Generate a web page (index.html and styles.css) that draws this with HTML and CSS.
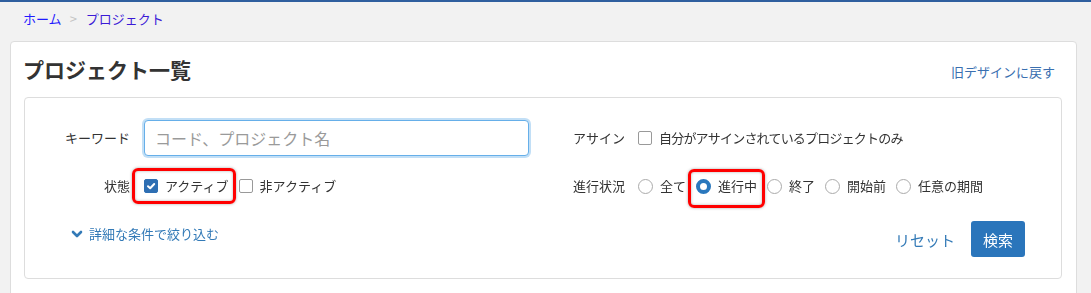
FILE: index.html
```html
<!DOCTYPE html>
<html lang="ja">
<head>
  <meta charset="UTF-8" />
  <title>プロジェクト一覧</title>
  <meta name="viewport" content="width=device-width, initial-scale=1.0" />
  <link rel="stylesheet" href="styles.css">
</head>
<body>

  <!-- Breadcrumb -->
  <div class="breadcrumb">
    <a class="crumb-home" href="#">ホーム</a>
    <span class="crumb-sep">&gt;</span>
    <a class="crumb-current" href="#">プロジェクト</a>
  </div>

  <!-- Card -->
  <div class="card">
    <div class="card-header">
      <h1 class="card-title">プロジェクト一覧</h1>
      <a class="old-design" href="#">旧デザインに戻す</a>
    </div>

    <!-- Search Panel -->
    <div class="search-panel">
      <div class="search-row">
        <div class="field">
          <span class="field-label">キーワード</span>
          <input class="keyword-input" type="text" placeholder="コード、プロジェクト名" autofocus />
        </div>
        <div class="field field-right">
          <span class="inline-label">アサイン</span>
          <label class="option">
            <span class="check"></span>
            <span class="assign-text">自分がアサインされているプロジェクトのみ</span>
          </label>
        </div>
      </div>

      <div class="search-row">
        <div class="field">
          <span class="field-label">状態</span>
          <div class="options">
            <label class="option marked marked-left">
              <span class="check checked">
                <svg width="10" height="10" viewBox="0 0 10 10"><polyline points="2,5.2 4.2,7.3 8.2,3" fill="none" stroke="#fff" stroke-width="2" stroke-linecap="round" stroke-linejoin="round"/></svg>
              </span>
              <span>アクティブ</span>
            </label>
            <label class="option">
              <span class="check"></span>
              <span>非アクティブ</span>
            </label>
          </div>
        </div>
        <div class="field field-right">
          <span class="inline-label">進行状況</span>
          <div class="options">
            <label class="option"><span class="radio"></span><span>全て</span></label>
            <label class="option marked marked-right"><span class="radio checked"></span><span>進行中</span></label>
            <label class="option"><span class="radio"></span><span>終了</span></label>
            <label class="option"><span class="radio"></span><span>開始前</span></label>
            <label class="option"><span class="radio"></span><span>任意の期間</span></label>
          </div>
        </div>
      </div>

      <div class="search-row actions-row">
        <a class="more-filters" href="#">
          <svg width="12" height="10" viewBox="0 0 12 10"><polyline points="2,3 6,7 10,3" fill="none" stroke="#337ab7" stroke-width="2.6" stroke-linecap="round" stroke-linejoin="round"/></svg>
          詳細な条件で絞り込む
        </a>
        <div class="actions">
          <a class="reset-link" href="#">リセット</a>
          <button class="search-btn">検索</button>
        </div>
      </div>
    </div>
  </div>

</body>
</html>
```

FILE: styles.css
```css
body {
  font-family: "Noto Sans CJK JP", "Noto Sans", sans-serif;
  background: #f2f2f2;
  margin: 0;
  border-top: 2px solid #2f5f9f;
  color: #333;
  font-size: 13px;
}
a {
  text-decoration: none;
}
.breadcrumb {
  padding: 7px 23px 0;
  height: 20px;
  line-height: 20px;
  margin-bottom: 12px;
  display: flex;
  align-items: center;
}
.crumb-home {
  color: #1f1aff;
}
.crumb-current {
  color: #3b1ad6;
}
.crumb-sep {
  color: #c4c4c4;
  padding: 0 9px 0 8px;
}
.card {
  background: #fff;
  border: 1px solid #ddd;
  border-radius: 4px;
  margin: 0 14px 0 10px;
  padding: 0 14px 20px 13px;
}
.card-header {
  height: 55px;
  display: flex;
  align-items: center;
  justify-content: space-between;
  padding-right: 7px;
}
.card-title {
  margin: 0 0 2px -1px;
  font-size: 21px;
  font-weight: bold;
  color: #333;
  line-height: 28px;
}
.old-design {
  color: #3a6fb0;
  margin-top: 4px;
}
.search-panel {
  border: 1px solid #ddd;
  border-radius: 4px;
  padding: 22px 36px 21px 0;
}
.search-row {
  display: grid;
  grid-template-columns: 518px 1fr;
  align-items: center;
  height: 36px;
}
.search-row + .search-row {
  margin-top: 12px;
}
.search-row.actions-row {
  margin-top: 17px;
  display: flex;
  justify-content: space-between;
}
.field {
  display: flex;
  align-items: center;
  line-height: 20px;
}
.field-label {
  width: 105px;
  text-align: right;
  margin-right: 14px;
  flex-shrink: 0;
}
.field-right {
  padding-left: 30px;
}
.inline-label {
  margin-right: 13px;
}
.assign-text {
  letter-spacing: -0.8px;
}
.keyword-input {
  width: 385px;
  height: 36px;
  box-sizing: border-box;
  border: 1px solid #66afe9;
  border-radius: 4px;
  box-shadow: 0 0 0 2px rgba(102, 175, 233, 0.4);
  padding: 0 10px;
  font-family: inherit;
  font-size: 16px;
  color: #333;
  outline: none;
}
.keyword-input::placeholder {
  color: #9a9a9a;
}
.options {
  display: flex;
  align-items: center;
  gap: 10px;
}
.option {
  display: inline-flex;
  align-items: center;
  cursor: pointer;
}
.check {
  width: 14px;
  height: 14px;
  box-sizing: border-box;
  border: 1px solid #999;
  border-radius: 2px;
  margin-right: 7px;
  display: inline-flex;
  align-items: center;
  justify-content: center;
  background: #fff;
}
.check.checked {
  background: #2e6fb3;
  border-color: #2e6fb3;
}
.radio {
  width: 15px;
  height: 15px;
  box-sizing: border-box;
  border: 1px solid #aaa;
  border-radius: 50%;
  margin-right: 7px;
  background: #fff;
}
.radio.checked {
  border: 4.5px solid #2a78bd;
}
.marked {
  position: relative;
}
.marked::after {
  content: "";
  position: absolute;
  border: 3px solid #f00;
  border-radius: 6px;
  box-shadow: 0 0 3px rgba(0, 0, 0, 0.35), inset 0 0 3px rgba(0, 0, 0, 0.3);
  pointer-events: none;
}
.marked-left::after {
  top: -8px;
  bottom: -8px;
  left: -12px;
  right: -7px;
}
.marked-right::after {
  top: -7px;
  bottom: -12px;
  left: -8px;
  right: -8px;
}
.more-filters {
  align-self: flex-start;
  margin: 3px 0 0 46px;
  color: #337ab7;
  line-height: 20px;
  display: flex;
  align-items: center;
  gap: 6px;
}
.actions {
  display: flex;
  align-items: center;
  gap: 16px;
}
.reset-link {
  color: #337ab7;
  font-size: 15px;
}
.search-btn {
  height: 36px;
  padding: 0 12px;
  background: #2a75bb;
  color: #fff;
  border: none;
  border-radius: 3px;
  font-family: inherit;
  font-size: 15px;
  cursor: pointer;
}
```
